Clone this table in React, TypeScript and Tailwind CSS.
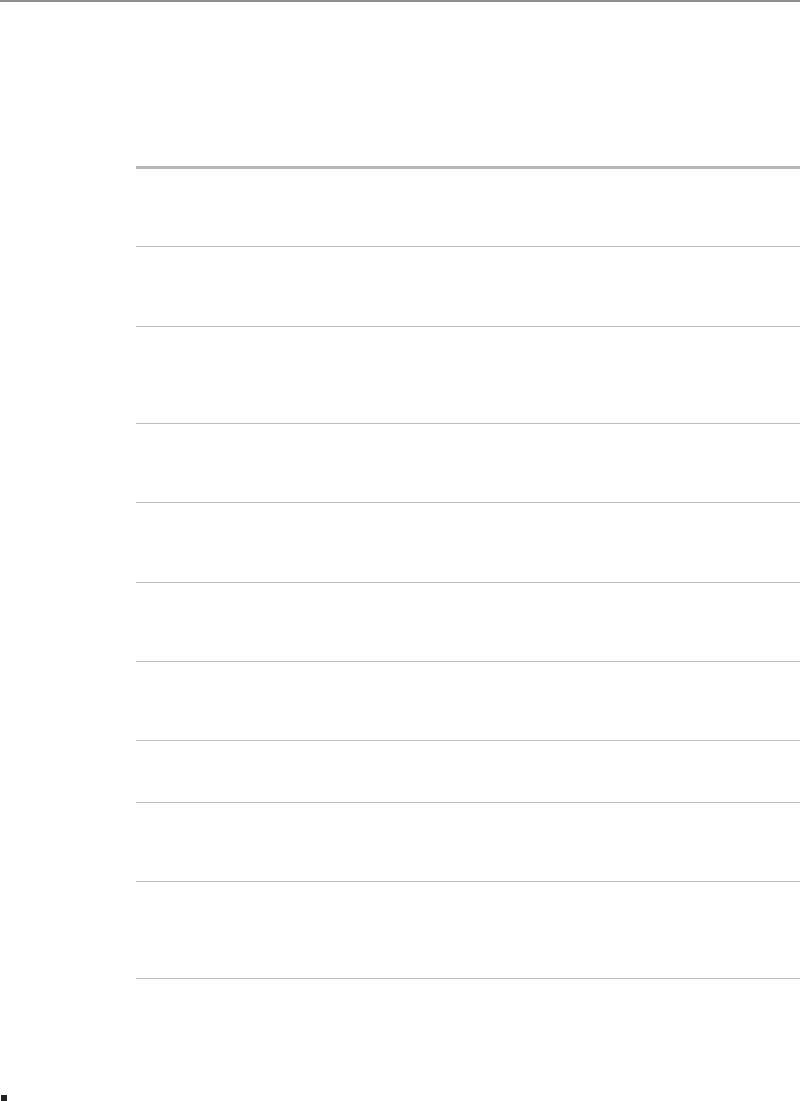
export default function App() {
  const rows = [77, 79, 96, 78, 79, 78, 78, 61, 78, 96]

  return (
    <div className="w-[800px] h-[1101px] overflow-hidden bg-white">
      <div className="h-[2px] bg-[#8f8f8f]" />
      <div className="h-[164px]" />
      <div className="ml-[136px] border-t-[3px] border-[#b6b6b6]">
        {rows.map((h, i) => (
          <div key={i} className="border-b border-[#bdbdbd]" style={{ height: h + 1 }} />
        ))}
      </div>
      <div className="h-[116px]" />
      <div className="ml-[1px] w-[6px] h-[6px] bg-[#222222]" />
    </div>
  )
}
